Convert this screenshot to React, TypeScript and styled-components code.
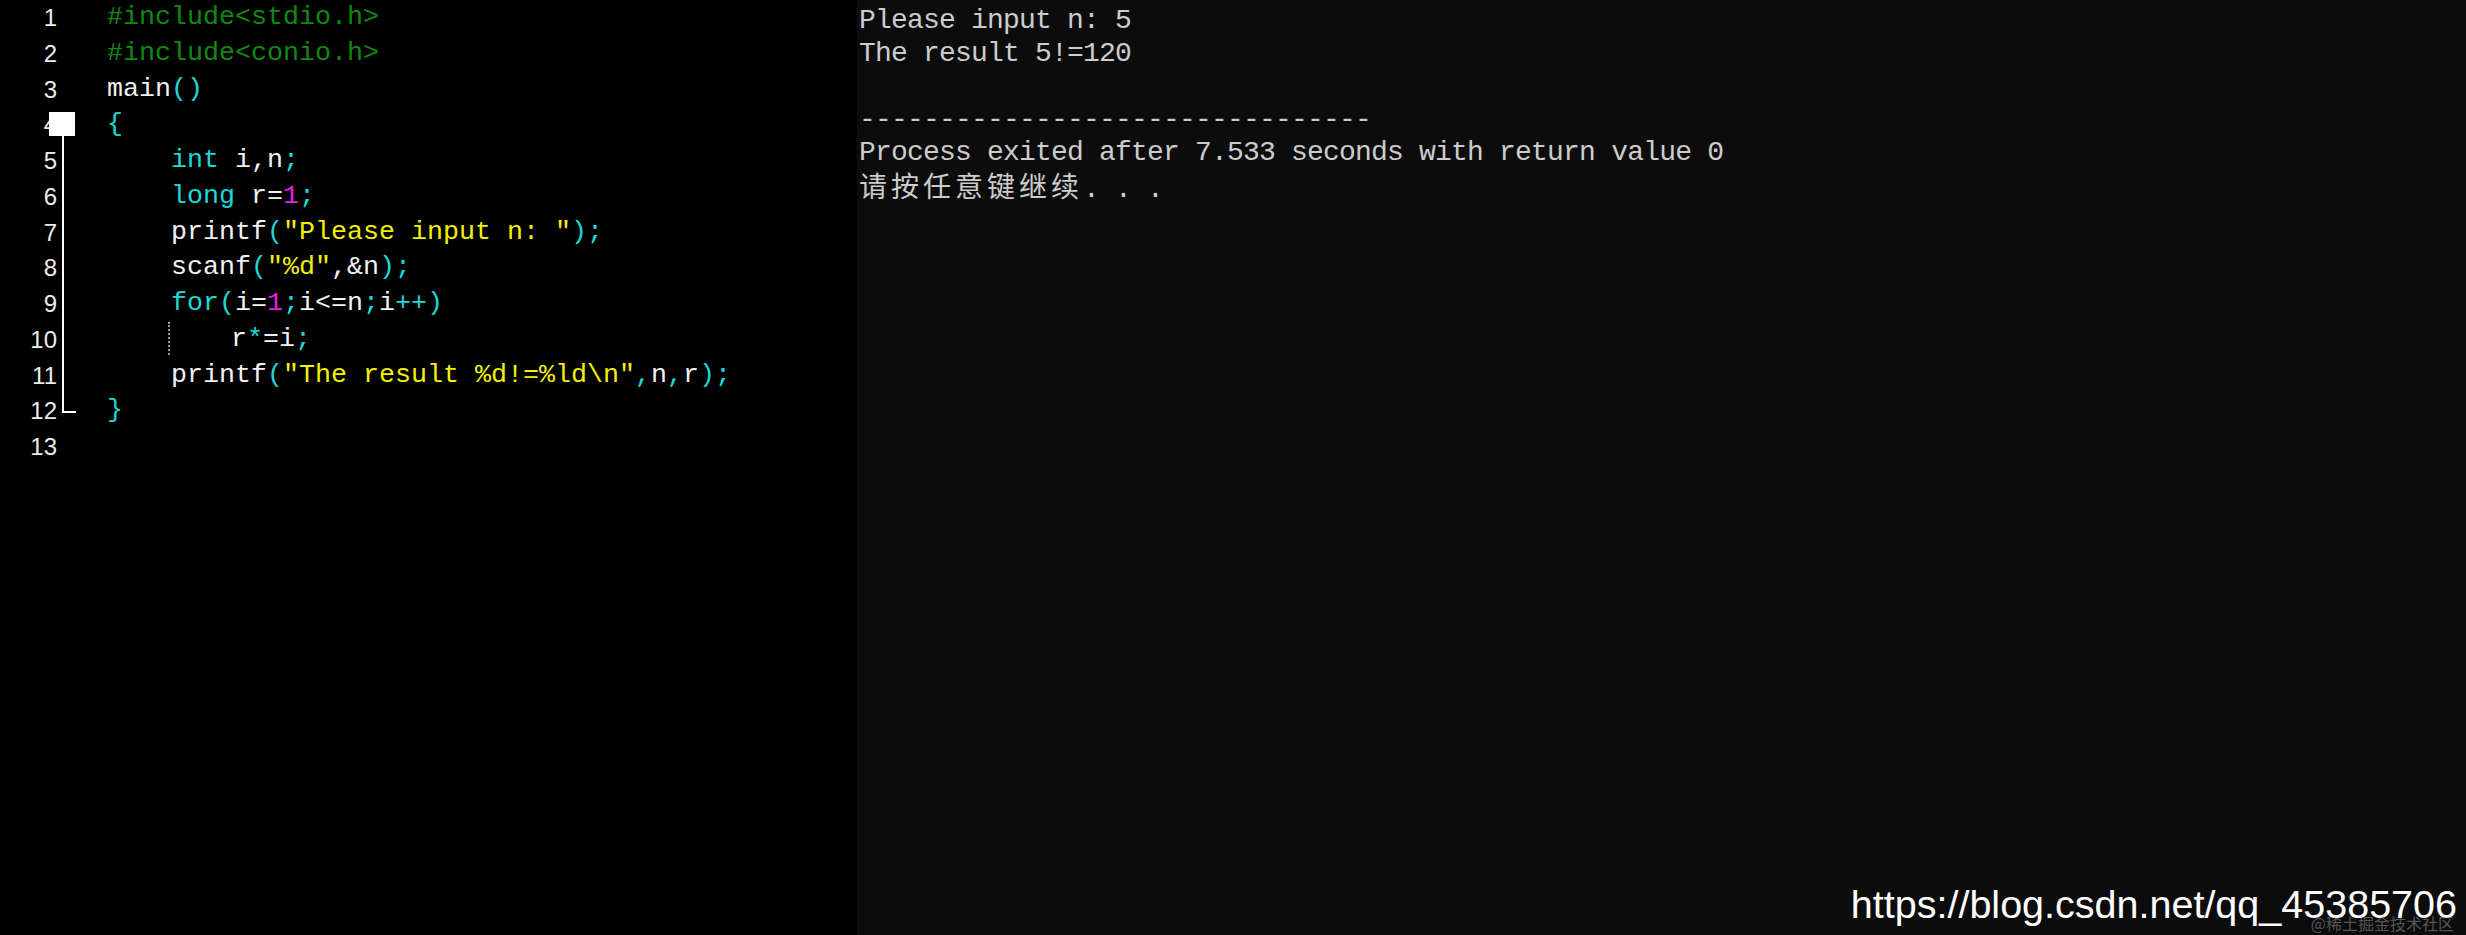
import React from "react";
import styled, { createGlobalStyle } from "styled-components";

const Global = createGlobalStyle`
  html, body { margin: 0; padding: 0; background: #000; }
  #root { width: 100vw; height: 100vh; }
`;

type Kind = "g" | "w" | "c" | "y" | "m";
type Tok = [Kind, string];

const COLORS: Record<Kind, string> = {
  g: "#0f8a0f",
  w: "#f2f2f2",
  c: "#1ed8d8",
  y: "#f2f200",
  m: "#e61ee6",
};

const Screen = styled.div`
  position: relative;
  display: flex;
  width: 100%;
  height: 100%;
  overflow: hidden;
`;

const Editor = styled.div`
  display: flex;
  width: 857px;
  flex-shrink: 0;
  height: 100%;
  background: #000;
`;

const LineNumbers = styled.div`
  width: 57px;
  font-family: "Liberation Sans", Arial, sans-serif;
  font-size: 24px;
  color: #ececec;
  text-align: right;
`;

const LineNo = styled.div`
  height: 35.75px;
  line-height: 35.75px;
`;

const FoldGutter = styled.div`
  position: relative;
  width: 50px;
`;

const FoldSvg = styled.svg`
  position: absolute;
  left: -8px;
  top: 0;
  overflow: visible;
`;

const Code = styled.div`
  flex: 1;
  font-family: "Liberation Mono", "DejaVu Sans Mono", monospace;
  font-size: 26.67px;
  white-space: pre;
`;

const CodeLine = styled.div`
  height: 35.75px;
  line-height: 35.75px;
`;

const Tk = styled.span<{ $k: Kind }>`
  color: ${(p) => COLORS[p.$k]};
`;

const Guide = styled.span`
  display: inline-block;
  width: 61px;
  height: 33px;
  margin-left: -3px;
  vertical-align: top;
  border-left: 2px dotted #9a9a9a;
`;

const Console = styled.div`
  flex: 1;
  height: 100%;
  background: #0c0c0c;
  padding: 4px 0 0 2px;
  box-sizing: border-box;
  color: #cccccc;
  font-family: "Liberation Mono", "DejaVu Sans Mono", monospace;
  font-size: 28px;
  letter-spacing: -0.8px;
  white-space: pre;
`;

const ConsoleLine = styled.div`
  height: 33px;
  line-height: 33px;
`;

const Cjk = styled.span`
  font-family: "Noto Sans CJK SC", sans-serif;
  font-size: 28px;
  letter-spacing: 4px;
  font-weight: 400;
`;

const Watermark = styled.div`
  position: absolute;
  right: 9px;
  bottom: 15px;
  font-family: "Liberation Sans", Arial, sans-serif;
  font-size: 39.5px;
  line-height: 32px;
  color: #ffffff;
`;

const SubMark = styled.div`
  position: absolute;
  right: 12px;
  bottom: 0;
  font-family: "Noto Sans CJK SC", sans-serif;
  font-size: 16px;
  line-height: 24px;
  color: rgba(150, 150, 150, 0.55);
`;

const lines: Tok[][] = [
  [["g", "#include<stdio.h>"]],
  [["g", "#include<conio.h>"]],
  [["w", "main"], ["c", "()"]],
  [["c", "{"]],
  [["w", "    "], ["c", "int"], ["w", " i,n"], ["c", ";"]],
  [["w", "    "], ["c", "long"], ["w", " r="], ["m", "1"], ["c", ";"]],
  [["w", "    printf"], ["c", "("], ["y", "\"Please input n: \""], ["c", ");"]],
  [["w", "    scanf"], ["c", "("], ["y", "\"%d\""], ["w", ",&n"], ["c", ");"]],
  [["w", "    "], ["c", "for("], ["w", "i="], ["m", "1"], ["c", ";"], ["w", "i<=n"], ["c", ";"], ["w", "i"], ["c", "++)"]],
  [["w", "r"], ["c", "*"], ["w", "=i"], ["c", ";"]],
  [["w", "    printf"], ["c", "("], ["y", "\"The result %d!=%ld\\n\""], ["c", ","], ["w", "n"], ["c", ","], ["w", "r"], ["c", ");"]],
  [["c", "}"]],
  [],
];

const consoleLines = [
  "Please input n: 5",
  "The result 5!=120",
  "",
  "--------------------------------",
  "Process exited after 7.533 seconds with return value 0",
];

export default function App() {
  return (
    <>
      <Global />
      <Screen>
        <Editor>
          <LineNumbers>
            {lines.map((_, i) => (
              <LineNo key={i}>{i + 1}</LineNo>
            ))}
          </LineNumbers>
          <FoldGutter>
            <FoldSvg width="40" height="420" viewBox="0 0 40 420">
              <rect x="0" y="112" width="26" height="24" fill="#ffffff" />
              <rect x="13" y="136" width="2" height="277" fill="#ffffff" />
              <rect x="13" y="411" width="14" height="2" fill="#ffffff" />
            </FoldSvg>
          </FoldGutter>
          <Code>
            {lines.map((toks, i) => (
              <CodeLine key={i}>
                {i === 9 && (
                  <>
                    {"    "}
                    <Guide />
                  </>
                )}
                {toks.map(([k, t], j) => (
                  <Tk key={j} $k={k}>
                    {t}
                  </Tk>
                ))}
              </CodeLine>
            ))}
          </Code>
        </Editor>
        <Console>
          {consoleLines.map((l, i) => (
            <ConsoleLine key={i}>{l}</ConsoleLine>
          ))}
          <ConsoleLine>
            <Cjk>请按任意键继续</Cjk>. . .
          </ConsoleLine>
        </Console>
        <Watermark>https://blog.csdn.net/qq_45385706</Watermark>
        <SubMark>@稀土掘金技术社区</SubMark>
      </Screen>
    </>
  );
}
